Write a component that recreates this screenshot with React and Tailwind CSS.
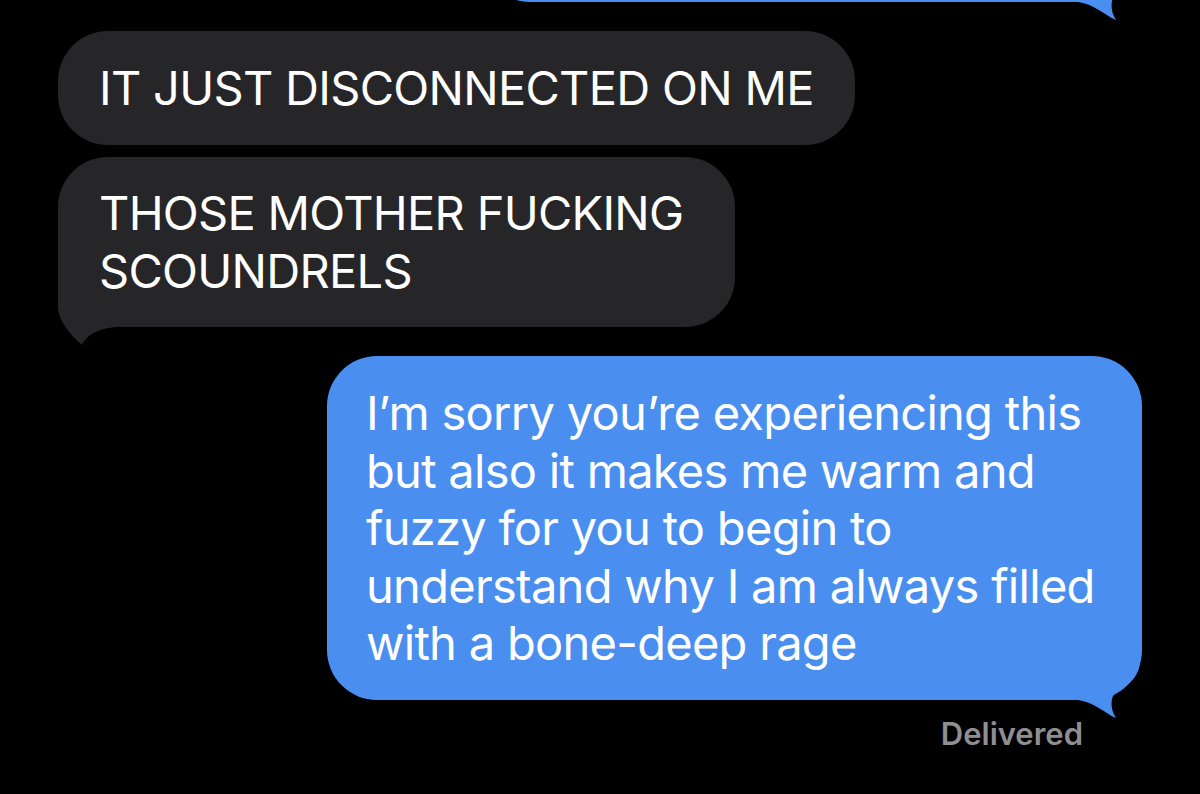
import React from "react";

function BlueTail() {
  return (
    <svg
      className="absolute right-0 bottom-[-20px]"
      width="84"
      height="80"
      viewBox="0 0 84 80"
    >
      <path
        d="M0,0 L82,0 L82,20 C82,42 62,48 55,56 C52,63 54,72 58,78 C48,74 36,62 20,60 L0,60 Z"
        fill="#4a8ff0"
      />
    </svg>
  );
}

function GrayTail() {
  return (
    <svg
      className="absolute left-0 bottom-[-20px]"
      width="60"
      height="80"
      viewBox="0 0 60 80"
    >
      <path
        d="M0,0 L0,40 C0,52 10,66 24,78 C28,70 36,62 58,60 L58,0 Z"
        fill="#262628"
      />
    </svg>
  );
}

export default function App() {
  return (
    <div className="w-[1200px] h-[794px] bg-black overflow-hidden font-['Inter',sans-serif] text-white text-[47px] tracking-[-0.015em]">
      <div className="flex flex-col">
        {/* previous outgoing bubble, only its bottom edge shows */}
        <div className="relative self-end mr-[58px] mt-[-98px] w-[662px] h-[100px] rounded-[50px] bg-[#4a8ff0]">
          <BlueTail />
        </div>

        <div className="self-start ml-[58px] mt-[29px] px-[41px] py-[28px] rounded-[50px] bg-[#262628] leading-[58px]">
          IT JUST DISCONNECTED ON ME
        </div>

        <div className="relative self-start ml-[58px] mt-[12px] pl-[41px] pr-[52px] py-[27px] rounded-[50px] bg-[#262628] leading-[58px]">
          <GrayTail />
          <span className="relative">
            THOSE MOTHER FUCKING
            <br />
            SCOUNDRELS
          </span>
        </div>

        <div className="relative self-end mr-[58px] mt-[29px] w-[815px] pl-[39px] py-[28px] rounded-[50px] bg-[#4a8ff0] leading-[57.5px]">
          <BlueTail />
          <span className="relative">
            I’m sorry you’re experiencing this
            <br />
            but also it makes me warm and
            <br />
            fuzzy for you to begin to
            <br />
            understand why I am always filled
            <br />
            with a bone-deep rage
          </span>
        </div>

        <div className="self-end mr-[117px] mt-[16px] text-[31px] leading-[36px] tracking-normal font-semibold text-[#8e8e93]">
          Delivered
        </div>
      </div>
    </div>
  );
}
